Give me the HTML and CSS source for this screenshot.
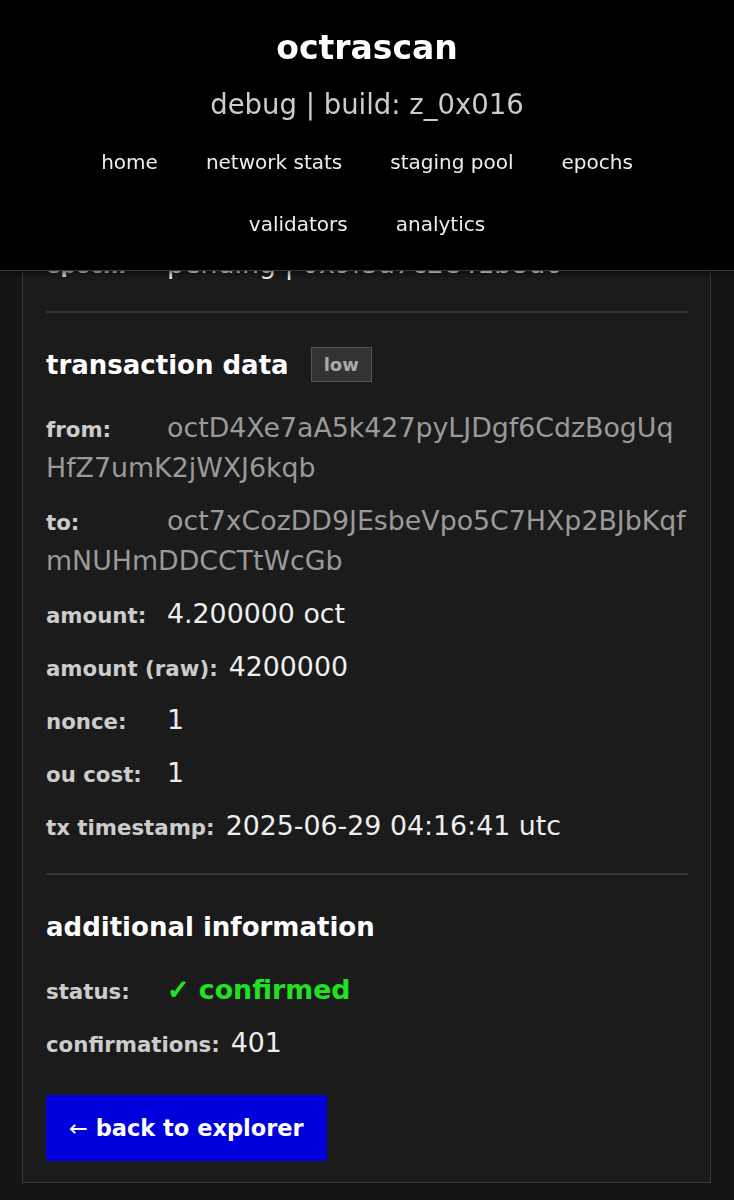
FILE: index.html
```html
<!DOCTYPE html>
<html lang="en">
<head>
  <meta charset="UTF-8">
  <meta name="viewport" content="width=device-width, initial-scale=1.0">
  <title>octrascan - transaction</title>
  <link rel="stylesheet" href="styles.css">
</head>
<body>
  <header class="site-header">
    <h1 class="logo">octrascan</h1>
    <div class="build">debug | build: z_0x016</div>
    <nav class="nav">
      <a href="#">home</a>
      <a href="#">network stats</a>
      <a href="#">staging pool</a>
      <a href="#">epochs</a>
      <a href="#">validators</a>
      <a href="#">analytics</a>
    </nav>
  </header>

  <main class="page">
    <div class="card">
      <div class="row">
        <span class="label">epoch:</span><span class="value">pending | 0x9f3a7c2e41b8d6</span>
      </div>

      <hr class="divider">

      <h3 class="section-title">transaction data <span class="badge">low</span></h3>
      <div class="row">
        <span class="label">from:</span><span class="value dim">octD4Xe7aA5k427pyLJDgf6CdzBogUqHfZ7umK2jWXJ6kqb</span>
      </div>
      <div class="row">
        <span class="label">to:</span><span class="value dim">oct7xCozDD9JEsbeVpo5C7HXp2BJbKqfmNUHmDDCCTtWcGb</span>
      </div>
      <div class="row">
        <span class="label">amount:</span><span class="value">4.200000 oct</span>
      </div>
      <div class="row">
        <span class="label">amount (raw):</span><span class="value">4200000</span>
      </div>
      <div class="row">
        <span class="label">nonce:</span><span class="value">1</span>
      </div>
      <div class="row">
        <span class="label">ou cost:</span><span class="value">1</span>
      </div>
      <div class="row">
        <span class="label">tx timestamp:</span><span class="value">2025-06-29 04:16:41 utc</span>
      </div>

      <hr class="divider">

      <h3 class="section-title">additional information</h3>
      <div class="row">
        <span class="label">status:</span><span class="value ok"><span class="check">✓</span> confirmed</span>
      </div>
      <div class="row">
        <span class="label">confirmations:</span><span class="value">401</span>
      </div>

      <a href="#" class="back-btn"><span class="arrow">←</span> back to explorer</a>
    </div>
  </main>
</body>
</html>
```

FILE: styles.css
```css
* {
  box-sizing: border-box;
}
body {
  margin: 0;
  background: #151515;
  color: #eee;
  font-family: "DejaVu Sans", Verdana, sans-serif;
}

/* header sits over the page while scrolling */
.site-header {
  position: fixed;
  top: 0;
  left: 0;
  right: 0;
  z-index: 10;
  height: 271px;
  padding: 28px 20px 0;
  background: #000;
  border-bottom: 1px solid #3a3a3a;
  box-shadow: 0 2px 6px rgba(0, 0, 0, .6);
  text-align: center;
}
.logo {
  margin: 0;
  font-size: 33px;
  line-height: 40px;
  font-weight: bold;
  color: #fff;
}
.build {
  margin-top: 19px;
  font-size: 27.5px;
  line-height: 34px;
  color: #ccc;
}
.nav {
  display: flex;
  flex-wrap: wrap;
  justify-content: center;
  column-gap: 48px;
  row-gap: 38px;
  max-width: 640px;
  margin: 29px auto 0;
}
.nav a {
  font-size: 20px;
  line-height: 24px;
  color: #eee;
  text-decoration: none;
}

.page {
  padding: 200px 23px 0 22px;
}
.card {
  background: #1b1b1b;
  border: 1px solid #383838;
  padding: 43px 22px 21px 23px;
}

.row {
  margin-bottom: 13px;
  font-size: 26.8px;
  line-height: 40px;
  word-break: break-all;
}
.label {
  display: inline-block;
  min-width: 110px;
  margin-right: 11px;
  font-size: 21.3px;
  line-height: 1;
  font-weight: bold;
  color: #ccc;
  word-break: normal;
}
.value {
  color: #eee;
}
.value.dim {
  color: #9a9a9a;
}
.value.ok {
  color: #22e022;
  font-weight: bold;
}
.check {
  -webkit-text-stroke: 1.2px #22e022;
}

.divider {
  height: 2px;
  margin: 27px 0 34px;
  border: 0;
  background: #353535;
}

.section-title {
  display: flex;
  align-items: center;
  min-height: 35px;
  margin: 0 0 26px;
  font-size: 26px;
  font-weight: bold;
  color: #fff;
}
.badge {
  margin-left: 22px;
  padding: 0 12px;
  font-size: 18px;
  line-height: 33px;
  color: #aaa;
  background: #333;
  border: 1px solid #555;
}

.back-btn {
  display: block;
  width: fit-content;
  margin-top: 32px;
  padding: 20px 23px;
  background: #0000dd;
  color: #fff;
  font-size: 22.5px;
  line-height: 26px;
  font-weight: bold;
  text-decoration: none;
}
.back-btn .arrow {
  font-weight: normal;
}
```
